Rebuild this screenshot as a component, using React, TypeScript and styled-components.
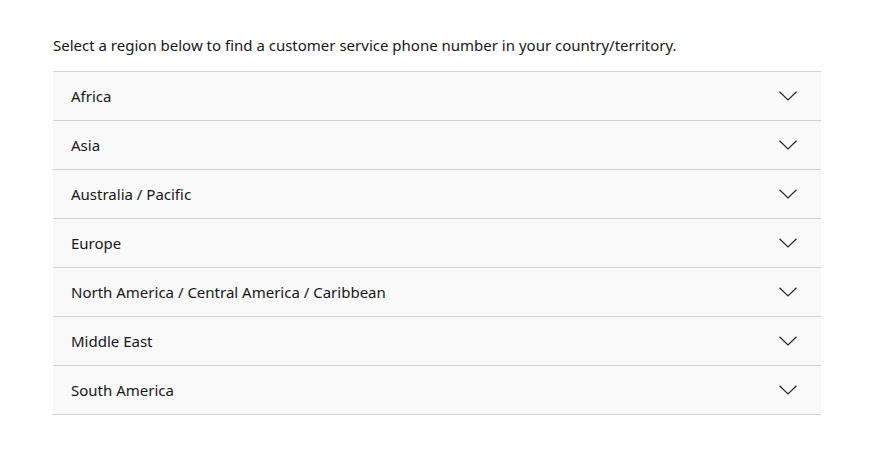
import React from "react"
import styled, { createGlobalStyle } from "styled-components"

const GlobalStyle = createGlobalStyle`
  body {
    margin: 0;
    background: #ffffff;
    font-family: "Segoe UI", "Noto Sans", "Open Sans", sans-serif;
    color: #171717;
  }
`

const Page = styled.main`
  padding: 34px 71px 0 53px;
  width: 768px;
`

const Intro = styled.p`
  margin: 0 0 15px;
  font-size: 15px;
  line-height: 22px;
  color: #171717;
`

const List = styled.ul`
  margin: 0;
  padding: 0;
  list-style-type: none;
  border-top: 1px solid #d2d2d2;
`

const Item = styled.li`
  display: flex;
  align-items: center;
  justify-content: space-between;
  height: 48px;
  padding: 0 24px 0 18px;
  background-color: #f9f9f9;
  border-bottom: 1px solid #d2d2d2;
  font-size: 15px;
  color: #171717;
`

const Label = styled.span`
  line-height: 20px;
`

const Chevron = () => (
  <svg width="18" height="10" viewBox="0 0 18 10" fill="none">
    <path d="M0.5 0.8 L9 9 L17.5 0.8" stroke="#262626" strokeWidth="1.2" />
  </svg>
)

const regions = [
  "Africa",
  "Asia",
  "Australia / Pacific",
  "Europe",
  "North America / Central America / Caribbean",
  "Middle East",
  "South America"
]

const App: React.FC = () => {
  return (
    <>
      <GlobalStyle />
      <Page>
        <Intro>
          Select a region below to find a customer service phone number in your
          country/territory.
        </Intro>
        <List>
          {regions.map((region) => (
            <Item key={region}>
              <Label children={region} />
              <Chevron />
            </Item>
          ))}
        </List>
      </Page>
    </>
  )
}

export default App
